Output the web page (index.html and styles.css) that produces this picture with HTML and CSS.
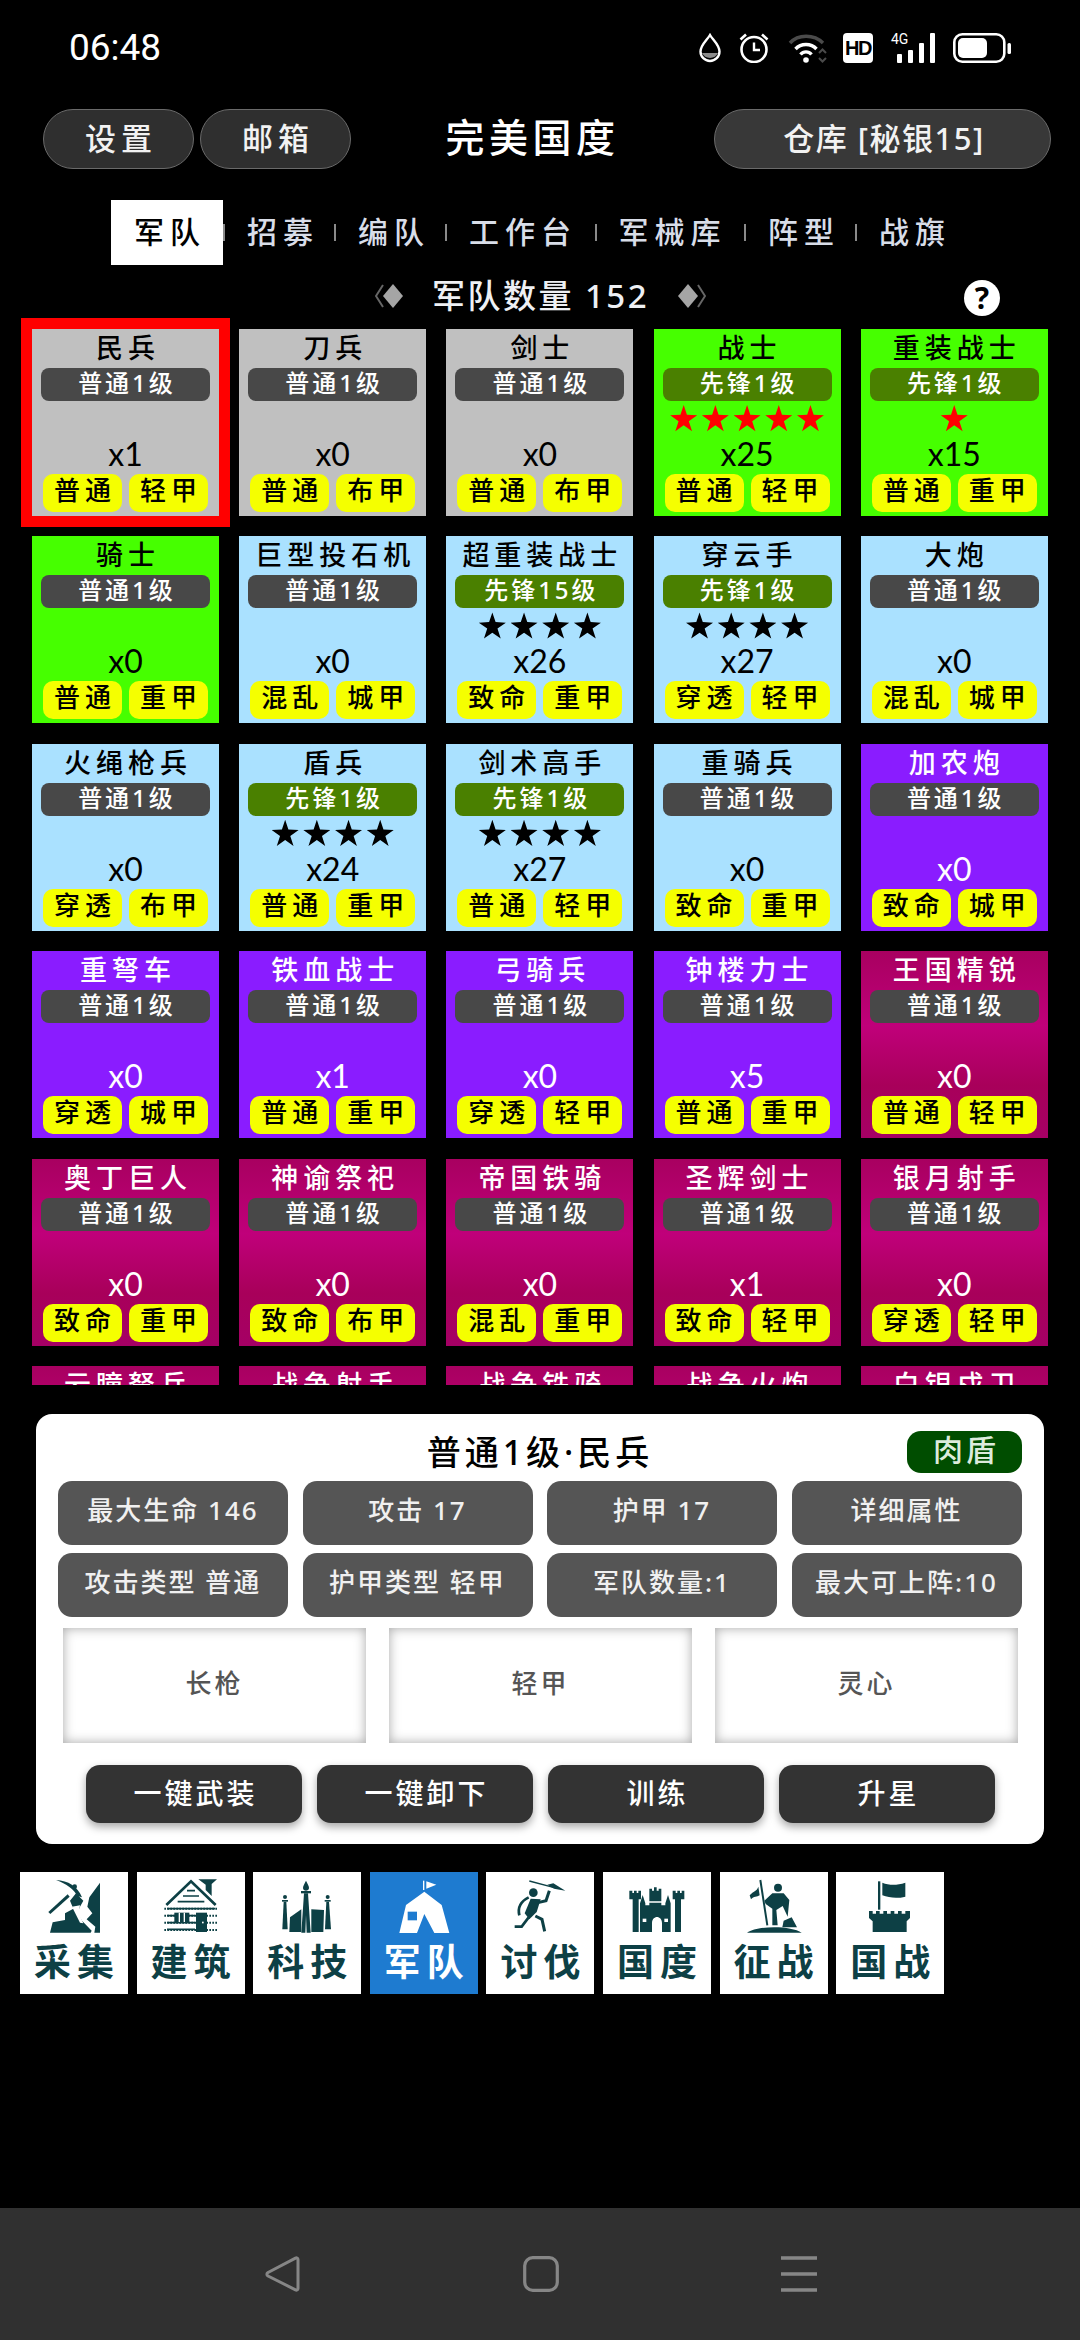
FILE: index.html
```html
<!DOCTYPE html>
<html lang="zh-CN">
<head>
<meta charset="utf-8">
<title>完美国度</title>
<link rel="stylesheet" href="styles.css">
</head>
<body>
<div class="screen">
  <div class="status">
    <span class="time">06:48</span>
    <div class="status-icons">
      <svg class="si-drop" viewBox="0 0 24 30"><path d="M4 20h16a9 9 0 0 1-16 0z" fill="#8a8a8a"/><path d="M12 2C9 7 2.500 12 2.500 18.500a9.500 9.500 0 0 0 19 0C21.500 12 15 7 12 2z" fill="none" stroke="#fff" stroke-width="2.400"/></svg>
      <svg class="si-alarm" viewBox="0 0 30 30"><circle cx="15" cy="16.500" r="12.500" fill="none" stroke="#fff" stroke-width="2.600"/><path d="M15 9.500v7.500h6" fill="none" stroke="#fff" stroke-width="2.400"/><path d="M1.500 6.500L7 1.500M28.500 6.500L23 1.500" fill="none" stroke="#fff" stroke-width="2.600"/></svg>
      <svg class="si-wifi" viewBox="0 0 40 30"><path d="M2 10C10 1 26 1 35 10" fill="none" stroke="#4a4a4a" stroke-width="3.400"/><path d="M7.500 16C13 10 23 10 28.500 16" fill="none" stroke="#fff" stroke-width="3.400"/><path d="M12.500 21.500C15.500 18 20.500 18 23.500 21.500" fill="none" stroke="#fff" stroke-width="3.400"/><circle cx="18" cy="27" r="2.800" fill="#fff"/><path d="M31 20l3.500-3.500 3.500 3.500M31 25l3.500 3.500 3.500-3.500" fill="none" stroke="#4a4a4a" stroke-width="2"/></svg>
      <span class="si-hd"><span class="hd-text">HD</span></span>
      <span class="si-net"><span class="net-text">4G</span><svg viewBox="0 0 44 30"><rect x="6" y="21" width="5" height="9" rx="1" fill="#fff"/><rect x="17" y="17" width="5" height="13" rx="1" fill="#fff"/><rect x="28" y="10" width="5" height="20" rx="1" fill="#fff"/><rect x="39" y="0" width="5" height="30" rx="1" fill="#fff"/></svg></span>
      <svg class="si-batt" viewBox="0 0 58 30"><rect x="1.300" y="1.300" width="50" height="27.400" rx="8" fill="none" stroke="#fff" stroke-width="2.600"/><rect x="5" y="5" width="29" height="20" rx="5" fill="#fff"/><rect x="54.500" y="10" width="3.500" height="11" rx="1.500" fill="#fff"/></svg>
    </div>
  </div>

  <header class="topbar">
    <button class="pill-btn pill-small">设置</button>
    <button class="pill-btn pill-small pill-second">邮箱</button>
    <h1 class="app-title">完美国度</h1>
    <button class="pill-btn pill-wide">仓库 [秘银15]</button>
  </header>

  <nav class="tabs">
    <span class="tab tab-active">军队</span><i class="sep"></i>
    <span class="tab">招募</span><i class="sep"></i>
    <span class="tab">编队</span><i class="sep"></i>
    <span class="tab tab-wide">工作台</span><i class="sep"></i>
    <span class="tab tab-wide">军械库</span><i class="sep"></i>
    <span class="tab">阵型</span><i class="sep"></i>
    <span class="tab">战旗</span>
  </nav>

  <div class="count-row">
    <svg class="diamond" viewBox="0 0 30 28"><path d="M8 3L1 14l7 11" fill="none" stroke="#666" stroke-width="2"/><path d="M18 2l10 12-10 12-10-12z" fill="#a5a5a5"/></svg>
    <span class="count-text">军队数量 152</span>
    <svg class="diamond" viewBox="0 0 30 28"><path d="M22 3l7 11-7 11" fill="none" stroke="#666" stroke-width="2"/><path d="M12 2l10 12-10 12L2 14z" fill="#a5a5a5"/></svg>
    <span class="help">?</span>
  </div>

  <section class="grid-clip">
    <div class="unit-grid">
      <article class="card c-gray selected"><h3>民兵</h3><div class="rank">普通1级</div><div class="stars"></div><div class="qty">x1</div><div class="tags"><span>普通</span><span>轻甲</span></div></article>
      <article class="card c-gray"><h3>刀兵</h3><div class="rank">普通1级</div><div class="stars"></div><div class="qty">x0</div><div class="tags"><span>普通</span><span>布甲</span></div></article>
      <article class="card c-gray"><h3>剑士</h3><div class="rank">普通1级</div><div class="stars"></div><div class="qty">x0</div><div class="tags"><span>普通</span><span>布甲</span></div></article>
      <article class="card c-green"><h3>战士</h3><div class="rank vanguard">先锋1级</div><div class="stars red"><i></i><i></i><i></i><i></i><i></i></div><div class="qty">x25</div><div class="tags"><span>普通</span><span>轻甲</span></div></article>
      <article class="card c-green"><h3>重装战士</h3><div class="rank vanguard">先锋1级</div><div class="stars red"><i></i></div><div class="qty">x15</div><div class="tags"><span>普通</span><span>重甲</span></div></article>

      <article class="card c-green"><h3>骑士</h3><div class="rank">普通1级</div><div class="stars"></div><div class="qty">x0</div><div class="tags"><span>普通</span><span>重甲</span></div></article>
      <article class="card c-blue"><h3>巨型投石机</h3><div class="rank">普通1级</div><div class="stars"></div><div class="qty">x0</div><div class="tags"><span>混乱</span><span>城甲</span></div></article>
      <article class="card c-blue"><h3>超重装战士</h3><div class="rank vanguard">先锋15级</div><div class="stars"><i></i><i></i><i></i><i></i></div><div class="qty">x26</div><div class="tags"><span>致命</span><span>重甲</span></div></article>
      <article class="card c-blue"><h3>穿云手</h3><div class="rank vanguard">先锋1级</div><div class="stars"><i></i><i></i><i></i><i></i></div><div class="qty">x27</div><div class="tags"><span>穿透</span><span>轻甲</span></div></article>
      <article class="card c-blue"><h3>大炮</h3><div class="rank">普通1级</div><div class="stars"></div><div class="qty">x0</div><div class="tags"><span>混乱</span><span>城甲</span></div></article>

      <article class="card c-blue"><h3>火绳枪兵</h3><div class="rank">普通1级</div><div class="stars"></div><div class="qty">x0</div><div class="tags"><span>穿透</span><span>布甲</span></div></article>
      <article class="card c-blue"><h3>盾兵</h3><div class="rank vanguard">先锋1级</div><div class="stars"><i></i><i></i><i></i><i></i></div><div class="qty">x24</div><div class="tags"><span>普通</span><span>重甲</span></div></article>
      <article class="card c-blue"><h3>剑术高手</h3><div class="rank vanguard">先锋1级</div><div class="stars"><i></i><i></i><i></i><i></i></div><div class="qty">x27</div><div class="tags"><span>普通</span><span>轻甲</span></div></article>
      <article class="card c-blue"><h3>重骑兵</h3><div class="rank">普通1级</div><div class="stars"></div><div class="qty">x0</div><div class="tags"><span>致命</span><span>重甲</span></div></article>
      <article class="card c-purple"><h3>加农炮</h3><div class="rank">普通1级</div><div class="stars"></div><div class="qty">x0</div><div class="tags"><span>致命</span><span>城甲</span></div></article>

      <article class="card c-purple"><h3>重弩车</h3><div class="rank">普通1级</div><div class="stars"></div><div class="qty">x0</div><div class="tags"><span>穿透</span><span>城甲</span></div></article>
      <article class="card c-purple"><h3>铁血战士</h3><div class="rank">普通1级</div><div class="stars"></div><div class="qty">x1</div><div class="tags"><span>普通</span><span>重甲</span></div></article>
      <article class="card c-purple"><h3>弓骑兵</h3><div class="rank">普通1级</div><div class="stars"></div><div class="qty">x0</div><div class="tags"><span>穿透</span><span>轻甲</span></div></article>
      <article class="card c-purple"><h3>钟楼力士</h3><div class="rank">普通1级</div><div class="stars"></div><div class="qty">x5</div><div class="tags"><span>普通</span><span>重甲</span></div></article>
      <article class="card c-crimson"><h3>王国精锐</h3><div class="rank">普通1级</div><div class="stars"></div><div class="qty">x0</div><div class="tags"><span>普通</span><span>轻甲</span></div></article>

      <article class="card c-crimson"><h3>奥丁巨人</h3><div class="rank">普通1级</div><div class="stars"></div><div class="qty">x0</div><div class="tags"><span>致命</span><span>重甲</span></div></article>
      <article class="card c-crimson"><h3>神谕祭祀</h3><div class="rank">普通1级</div><div class="stars"></div><div class="qty">x0</div><div class="tags"><span>致命</span><span>布甲</span></div></article>
      <article class="card c-crimson"><h3>帝国铁骑</h3><div class="rank">普通1级</div><div class="stars"></div><div class="qty">x0</div><div class="tags"><span>混乱</span><span>重甲</span></div></article>
      <article class="card c-crimson"><h3>圣辉剑士</h3><div class="rank">普通1级</div><div class="stars"></div><div class="qty">x1</div><div class="tags"><span>致命</span><span>轻甲</span></div></article>
      <article class="card c-crimson"><h3>银月射手</h3><div class="rank">普通1级</div><div class="stars"></div><div class="qty">x0</div><div class="tags"><span>穿透</span><span>轻甲</span></div></article>

      <article class="card c-crimson"><h3>云瞳弩兵</h3></article>
      <article class="card c-crimson"><h3>战争射手</h3></article>
      <article class="card c-crimson"><h3>战争铁骑</h3></article>
      <article class="card c-crimson"><h3>战争火炮</h3></article>
      <article class="card c-crimson"><h3>白银戍卫</h3></article>
    </div>
  </section>

  <section class="panel">
    <div class="panel-head">
      <h2 class="panel-title">普通1级·民兵</h2>
      <span class="role-badge">肉盾</span>
    </div>
    <div class="stat-grid">
      <div class="stat">最大生命 146</div>
      <div class="stat">攻击 17</div>
      <div class="stat">护甲 17</div>
      <div class="stat">详细属性</div>
      <div class="stat">攻击类型 普通</div>
      <div class="stat">护甲类型 轻甲</div>
      <div class="stat">军队数量:1</div>
      <div class="stat">最大可上阵:10</div>
    </div>
    <div class="slots">
      <div class="slot">长枪</div>
      <div class="slot">轻甲</div>
      <div class="slot">灵心</div>
    </div>
    <div class="actions">
      <button class="action">一键武装</button>
      <button class="action">一键卸下</button>
      <button class="action">训练</button>
      <button class="action">升星</button>
    </div>
  </section>

  <nav class="bottom-tiles">
    <a class="tile">
      <svg viewBox="60 36 324 198"><g class="ink">
        <path d="M168 60C205 62 232 78 246 112L232 108C222 88 200 72 168 60z"/>
        <path d="M145 156L203 103 209 110 151 162z"/>
        <circle cx="224" cy="80" r="7"/>
        <path d="M300 68V218H283L286 200 260 178 277 160 262 140 268 112z"/>
        <path d="M150 218L158 187 195 180 195 160 220 146 210 122 228 100 250 122 240 140 232 160 246 182 275 212 272 218z"/>
      </g><path d="M216 140L240 136 236 160 250 190 240 188z" class="cut"/></svg>
      <span>采集</span>
    </a>
    <a class="tile">
      <svg viewBox="408 36 324 198"><g class="ink">
        <path d="M496 135L570 64 644 135" fill="none" class="st8"/>
        <path d="M592 58H648L632 72V108L614 90V74z"/>
        <path d="M530 125H610M546 108H594M558 92H582" class="st5" fill="none"/>
        <path d="M498 146H642M498 167H582M498 188H582M498 208H582" class="st5" fill="none"/>
        <path d="M490 146H650M490 167H650M490 188H650M490 210H650" class="dots" fill="none"/>
        <rect x="520" y="158" width="45" height="28"/>
        <rect x="585" y="158" width="33" height="58"/>
      </g><path d="M535 158V186M550 158V186" class="cut-line"/><rect x="603" y="185" width="5" height="5" class="cut"/></svg>
      <span>建筑</span>
    </a>
    <a class="tile">
      <svg viewBox="759 36 324 198"><g class="ink">
        <path d="M918 62C923 72 927 78 927 84 927 90 922 92 918 92 914 92 909 90 909 84 909 78 913 72 918 62z"/>
        <rect x="903" y="93" width="30" height="7"/>
        <path d="M912 100H924L932 218H920L918 165 916 218H904z"/>
        <circle cx="855" cy="111" r="6"/><rect x="846" y="120" width="18" height="5"/>
        <path d="M851 125H859L863 208H847z"/>
        <circle cx="983" cy="111" r="6"/><rect x="974" y="120" width="18" height="5"/>
        <path d="M979 125H987L993 208H975z"/>
        <path d="M870 172L904 148 904 216H868z"/>
        <path d="M934 148L972 150 970 216H934z"/>
      </g></svg>
      <span>科技</span>
    </a>
    <a class="tile tile-active">
      <svg viewBox="1107 36 324 198"><g fill="#fff">
        <rect x="1266" y="62" width="4" height="28"/>
        <path d="M1276 64L1306 74 1276 86z"/>
        <path d="M1270 95L1322 135 1345 219H1300L1270 162 1248 219H1195L1215 135z"/>
      </g><rect x="1220" y="155" width="28" height="26" fill="#1e7bd0"/></svg>
      <span>军队</span>
    </a>
    <a class="tile">
      <svg viewBox="48 36 324 198"><g class="ink">
        <path d="M178 63L250 82" class="st4" fill="none"/>
        <path d="M232 74L250 70 286 92 252 86z"/>
        <circle cx="190" cy="98" r="13"/>
        <path d="M238 92L228 122 204 128" class="st9" fill="none"/>
        <path d="M176 112C152 124 142 140 148 166" class="st8" fill="none"/>
        <path d="M182 116L212 118 200 156 178 178 164 160z"/>
        <path d="M176 172L155 200 134 200" class="st8" fill="none"/>
        <path d="M196 168L216 178 224 214" class="st9" fill="none"/>
      </g></svg>
      <span>讨伐</span>
    </a>
    <a class="tile">
      <svg viewBox="399 36 324 198"><g class="ink">
        <path d="M478 92H487V99H492V92H500V99H505V92H513V118H506V216H488V118H478z"/>
        <path d="M608 92H617V99H622V92H630V99H635V92H643V118H633V216H615V118H608z"/>
        <path d="M538 86H546V92H552V82H560V92H566V86H574V124H538z"/>
        <path d="M510 130L518 105 526 130V136H538V128H574V136H586V130L594 105 602 130V216H576V190C576 165 546 165 546 190V216H510z"/>
      </g><rect x="518" y="176" width="11" height="10" class="cut"/><rect x="583" y="176" width="11" height="10" class="cut"/></svg>
      <span>国度</span>
    </a>
    <a class="tile">
      <svg viewBox="747 36 324 198"><g class="ink">
        <path d="M868 60L889 196" class="st6" fill="none"/>
        <path d="M862 80C856 96 848 92 836 106L840 118C848 108 858 112 866 106z"/>
        <circle cx="921" cy="83" r="12"/>
        <path d="M880 122L904 100H938L955 120 950 170 935 138 916 150 920 196H904V146L884 132z"/>
        <path d="M938 182L962 172 978 202H934z"/>
        <path d="M828 218C860 196 960 196 992 218z"/>
      </g></svg>
      <span>征战</span>
    </a>
    <a class="tile">
      <svg viewBox="1098 36 324 198"><g class="ink">
        <rect x="1224" y="64" width="7" height="85"/>
        <path d="M1237 68C1258 76 1280 76 1306 68V110C1282 116 1258 114 1237 106z"/>
        <path d="M1197 153H1208V161H1218V153H1229V161H1240V153H1251V161H1262V153H1273V161H1284V153H1295V161H1306V153H1320V174L1310 184V216H1208V184L1197 174z"/>
      </g></svg>
      <span>国战</span>
    </a>
  </nav>

  <div class="sysnav">
    <svg class="sys-icon" viewBox="0 0 36 36"><path d="M33 3.500C33 2 31.500 1.500 30.500 2.200L3 16.500C1.500 17.500 1.500 19 3 20L30.500 33.800C31.500 34.500 33 34 33 32.500z" fill="none" stroke="#868686" stroke-width="3" stroke-linejoin="round"/></svg>
    <svg class="sys-icon" viewBox="0 0 36 36"><rect x="1.700" y="1.700" width="32.600" height="32.600" rx="8" fill="none" stroke="#868686" stroke-width="3.200"/></svg>
    <svg class="sys-icon" viewBox="0 0 36 36"><path d="M0 2H36M0 18H36M0 34H36" stroke="#868686" stroke-width="3.400" fill="none"/></svg>
  </div>
</div>
</body>
</html>
```
FILE: styles.css
```css
* { box-sizing: border-box; }
html, body { margin: 0; padding: 0; background: #000; }
body { width: 1080px; height: 2340px; overflow: hidden; font-family: "Noto Sans", "Noto Sans CJK SC", sans-serif; font-weight: 500; color: #fff; }
h1, h2, h3 { margin: 0; font-weight: 500; }
button { font-family: inherit; font-weight: 500; border: 0; padding: 0; color: inherit; }
.screen { width: 1080px; height: 2340px; display: flex; flex-direction: column; }

.status { height: 109px; flex: none; display: flex; justify-content: space-between; padding: 33px 69px 0 69px; }
.time { font-family: Roboto, sans-serif; font-weight: 400; font-size: 37px; line-height: 30px; }
.status-icons { display: flex; align-items: flex-start; height: 30px; }
.status-icons svg { display: block; height: 30px; flex: none; }
.si-drop { width: 24px; }
.si-alarm { width: 30px; margin-left: 17px; }
.si-wifi { width: 40px; margin-left: 19px; }
.si-hd { flex: none; width: 30px; height: 30px; margin-left: 15px; border-radius: 4px; background: #fff; text-align: center; overflow: visible; }
.hd-text { display: block; font-family: "Liberation Sans", sans-serif; font-weight: 700; font-size: 20px; line-height: 30px; letter-spacing: -1.500px; color: #000; }
.si-net { flex: none; position: relative; width: 44px; height: 30px; margin-left: 18px; }
.si-net svg { width: 44px; }
.net-text { position: absolute; left: 0; top: -1px; font-family: Roboto, sans-serif; font-weight: 400; font-size: 14px; line-height: 14px; color: #fff; }
.si-batt { width: 58px; margin-left: 18px; }

.topbar { height: 60px; flex: none; display: flex; padding-left: 43px; }
.pill-btn { height: 60px; padding-bottom: 5px; border-radius: 30px; background: #2f2f2f; border: 1px solid #6a6a6a; font-size: 31px; color: #f2f2f2; letter-spacing: 5px; text-indent: 5px; }
.pill-small { width: 151px; }
.pill-second { margin-left: 6px; }
.app-title { width: 363px; text-align: center; font-size: 39px; line-height: 56px; letter-spacing: 4.500px; color: #fff; }
.pill-wide { width: 337px; letter-spacing: 1.500px; text-indent: 3px; background: #383838; }

.tabs { flex: none; height: 65px; margin-top: 31px; padding-left: 111px; display: flex; align-items: stretch; }
.tab { display: flex; align-items: center; justify-content: center; padding: 0 15px 6px 22px; font-size: 30px; letter-spacing: 6px; color: #d8dde8; }
.tab-wide { padding-right: 17.500px; }
.tab-active { width: 112px; padding: 0 0 6px 6px; background: #fff; color: #000; }
.sep { flex: none; width: 2px; height: 17px; margin-top: 24px; background: #8a8a8a; }

.count-row { flex: none; height: 53px; display: flex; align-items: center; position: relative; padding-top: 9px; padding-left: 375px; }
.diamond { width: 30px; height: 28px; flex: none; }
.count-text { width: 271px; padding-bottom: 5px; text-align: center; font-size: 33px; letter-spacing: 2.500px; color: #eef0f4; }
.help { position: absolute; left: 964px; top: 15px; width: 36px; height: 36px; border-radius: 50%; background: #fff; color: #000; font-family: "Noto Sans", sans-serif; font-size: 30px; font-weight: 700; line-height: 36px; text-align: center; }

.grid-clip { flex: none; height: 1067px; overflow: hidden; padding: 11px 32px 0; }
.unit-grid { display: grid; grid-template-columns: repeat(5, 187px); grid-auto-rows: 187px; column-gap: 20.2px; row-gap: 20.4px; }
.card { padding: 0 9px; display: flex; flex-direction: column; align-items: stretch; text-align: center; color: #000; }
.card h3 { height: 39px; margin: 0 -9px; font-size: 27px; line-height: 38px; letter-spacing: 5px; text-indent: 5px; white-space: nowrap; }
.rank { height: 33px; border-radius: 8px; background: #484848; color: #fff; font-size: 24px; line-height: 30px; letter-spacing: 3px; text-indent: 3px; }
.vanguard { background: #4a8000; }
.stars { height: 35px; display: flex; justify-content: center; align-items: center; gap: 4.700px; color: #000; }
.stars i { display: block; flex: none; width: 27px; height: 27px; background: currentColor; clip-path: polygon(50% 0, 62% 36%, 100% 38%, 69% 60%, 81% 97%, 50% 75%, 19% 97%, 31% 60%, 0 38%, 38% 36%); }
.red { color: #ff0000; }
.qty { height: 38px; font-family: Lato, sans-serif; font-weight: 400; font-size: 32px; line-height: 36px; }
.tags { display: flex; justify-content: space-between; padding: 0 2px; }
.tags span { width: 79px; height: 38px; background: #f5ff00; border-radius: 10px; color: #000; font-size: 26px; line-height: 33px; letter-spacing: 5px; text-indent: 5px; white-space: nowrap; }
.selected { outline: 11px solid #ff0000; }
.c-gray { background: #c0c0c0; }
.c-green { background: #46ff00; }
.c-blue { background: #aae1ff; }
.c-purple { background: #8a1cff; color: #fff; }
.c-crimson { background: linear-gradient(180deg, #a80060 0%, #c0007a 40%, #a8005a 72%, #a50065 100%); color: #fff; }

.panel { flex: none; margin: 29px 36px 0; width: 1008px; height: 430px; background: #fff; border-radius: 16px; padding: 17px 22px 0; color: #000; }
.panel-head { height: 42px; display: grid; grid-template-columns: 1fr auto 1fr; align-items: center; }
.panel-title { grid-column: 2; font-size: 34px; line-height: 38px; letter-spacing: 4px; white-space: nowrap; }
.role-badge { grid-column: 3; justify-self: end; width: 115px; height: 42px; border-radius: 14px; background: #004d00; color: #dcebdc; font-size: 30px; line-height: 37px; letter-spacing: 3px; text-indent: 3px; text-align: center; }
.stat-grid { margin-top: 8px; display: grid; grid-template-columns: repeat(4, 230px); grid-auto-rows: 64px; column-gap: 14.5px; row-gap: 8px; }
.stat { background: #555; border-radius: 14px; color: #f0f0f0; font-size: 26px; line-height: 59px; letter-spacing: 2px; text-align: center; white-space: nowrap; }
.slots { margin: 11px 0 0 5px; display: flex; gap: 23px; }
.slot { width: 303px; height: 115px; box-shadow: inset 0 0 12px rgba(0,0,0,.35); color: #555; font-size: 26px; line-height: 110px; letter-spacing: 3px; text-align: center; }
.actions { margin: 22px 0 0 28px; display: flex; gap: 15px; }
.action { width: 216px; height: 58px; padding-bottom: 4px; background: #333; border-radius: 14px; color: #fff; font-size: 28px; letter-spacing: 3px; text-indent: 3px; box-shadow: 0 4px 8px rgba(0,0,0,.35); }

.bottom-tiles { flex: none; margin-top: 28px; padding-left: 20px; display: flex; gap: 8.600px; }
.tile { width: 108px; height: 122px; background: #fff; display: flex; flex-direction: column; align-items: center; color: #0d4045; }
.tile svg { display: block; width: 108px; height: 66px; flex: none; }
.tile span { font-size: 37px; font-weight: 700; line-height: 48px; letter-spacing: 6px; margin-left: 6px; white-space: nowrap; }
.tile-active { background: #1e7bd0; color: #fff; }
.ink { fill: #0d4045; stroke: #0d4045; stroke-width: 0; }
.st4 { stroke-width: 4; } .st5 { stroke-width: 5; } .st6 { stroke-width: 6; } .st8 { stroke-width: 8; } .st9 { stroke-width: 9; }
.dots { stroke-width: 6; stroke-dasharray: 5 4; }
.cut { fill: #fff; }
.cut-line { stroke: #fff; stroke-width: 4; fill: none; }

.sysnav { flex: none; margin-top: auto; height: 132px; background: #303030; display: flex; align-items: flex-start; padding: 48px 0 0 265px; gap: 222px; }
.sys-icon { display: block; width: 36px; height: 36px; flex: none; }
```
